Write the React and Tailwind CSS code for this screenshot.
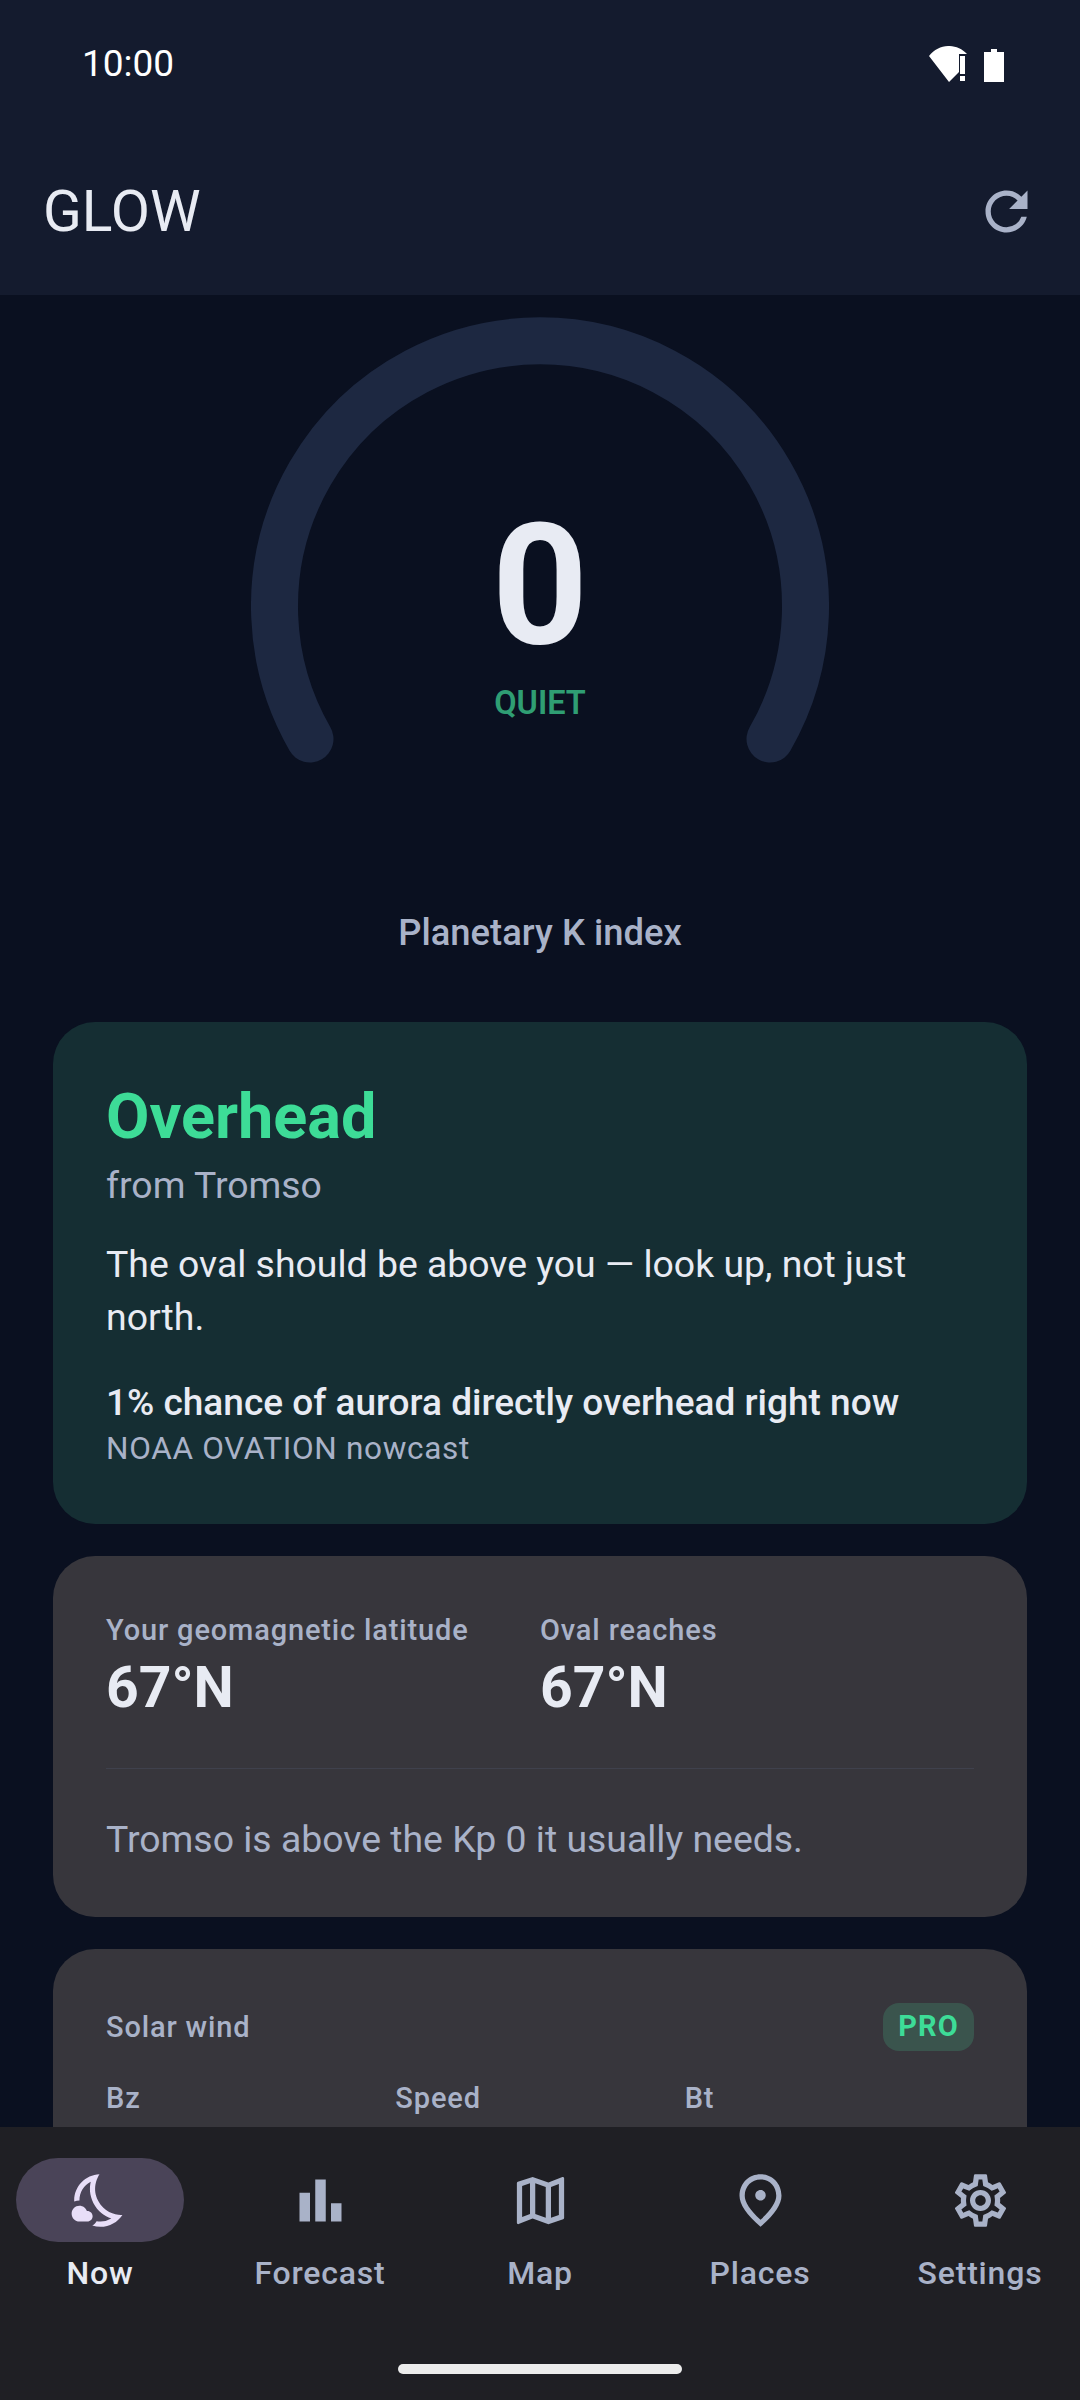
import { MdRefresh, MdBarChart, MdOutlineMap, MdOutlinePlace, MdOutlineSettings, MdOutlineNightsStay } from "react-icons/md";

const Gauge = () => {
  return (
    <div className="relative w-[578px] h-[470px]">
      <svg width="578" height="470" viewBox="0 0 578 470" className="block">
        <path d="M59 423 A265.5 265.5 0 1 1 519 423" fill="none" stroke="#1d2841" strokeWidth="47" strokeLinecap="round" />
      </svg>
      <div className="absolute left-0 right-0 top-[171px] text-center text-[168px] leading-[197px] font-bold text-[#e8ebf3]">0</div>
      <div className="absolute left-0 right-0 top-[366px] text-center text-[32.5px] leading-[42px] font-semibold text-[#2f9e73]">QUIET</div>
    </div>
  );
};

const StatusIcons = () => {
  return (
    <svg width="80" height="36" viewBox="0 0 80 36" className="block">
      <path d="M0 10 C10 -3 28 -3 38 8 L30 8 L30 26 L20 36 Z" fill="#fff" />
      <path d="M31 10h5v18h-5zM31 30h5v5h-5z" fill="#fff" />
      <path d="M55 6 h7 v-3 h6 v3 h7 v30 h-20 z" fill="#fff" />
    </svg>
  );
};

const Stat = ({ label, value, className }) => {
  return (
    <div className={className}>
      <div className="text-[29px] leading-[43px] font-medium tracking-[0.85px] text-[#a9b2c8]">{label}</div>
      <div className="mt-[2px] text-[57px] leading-[68px] font-bold text-[#e8ebf3]">{value}</div>
    </div>
  );
};

const NavItem = ({ icon: Icon, label, active }) => {
  return (
    <div className="w-[220px] shrink-0 flex flex-col items-center">
      <div className={`w-[168px] h-[84px] rounded-full flex items-center justify-center ${active ? "bg-[#4a4458] text-[#e8def8]" : "text-[#a9b2c8]"}`}>
        <Icon size={63} />
      </div>
      <div className={`mt-[10px] text-[32px] leading-[42px] font-medium tracking-[0.8px] ${active ? "text-[#e8ebf3]" : "text-[#a9b2c8]"}`}>{label}</div>
    </div>
  );
};

export default function App() {
  return (
    <div className="w-[1080px] h-[2400px] flex flex-col overflow-hidden bg-[#0a1020] font-['Roboto',sans-serif]">
      <header className="h-[295px] shrink-0 bg-[#141b2e] flex flex-col">
        <div className="h-[128px] pl-[82px] pr-[71px] flex items-center justify-between">
          <span className="text-[37px] leading-[44px] text-white">10:00</span>
          <StatusIcons />
        </div>
        <div className="flex-1 pl-[43px] pr-[42px] flex items-center justify-between">
          <span className="text-[57px] leading-[68px] text-[#e8ebf3]">GLOW</span>
          <MdRefresh size={63} className="text-[#a9b2c8]" />
        </div>
      </header>

      <main className="flex-1 min-h-0 overflow-hidden flex flex-col items-center">
        <div className="mt-[21px]">
          <Gauge />
        </div>
        <div className="mt-[125px] text-[36.4px] leading-[44px] font-medium text-[#a9b2c8]">Planetary K index</div>

        <section className="mt-[67px] w-[974px] h-[502px] shrink-0 rounded-[42px] bg-[#152e33] px-[53px] pt-[61px]">
          <div className="text-[63px] leading-[68px] font-bold text-[#3ddc97]">Overhead</div>
          <div className="mt-[10px] text-[37.4px] leading-[48px] text-[#a9b2c8]">from Tromso</div>
          <p className="mt-[29px] text-[37.4px] leading-[53px] text-[#e8ebf3]">The oval should be above you — look up, not just north.</p>
          <div className="mt-[35px] text-[37px] leading-[48px] font-medium text-[#e8ebf3]">1% chance of aurora directly overhead right now</div>
          <div className="mt-[2px] text-[31.5px] leading-[40px] tracking-[0.7px] text-[#a9b2c8]">NOAA OVATION nowcast</div>
        </section>

        <section className="mt-[32px] w-[974px] h-[361px] shrink-0 rounded-[42px] bg-[#37363c] px-[53px] pt-[53px]">
          <div className="flex">
            <Stat label="Your geomagnetic latitude" value="67°N" className="w-[434px]" />
            <Stat label="Oval reaches" value="67°N" />
          </div>
          <div className="mt-[46px] h-px bg-[#3f414d]" />
          <p className="mt-[46px] text-[37.4px] leading-[48px] text-[#a9b2c8]">Tromso is above the Kp 0 it usually needs.</p>
        </section>

        <section className="mt-[32px] w-[974px] shrink-0 grow rounded-t-[42px] bg-[#37363c] px-[53px] pt-[54px]">
          <div className="flex items-center justify-between">
            <span className="text-[29px] leading-[42px] font-medium tracking-[0.85px] text-[#a9b2c8]">Solar wind</span>
            <span className="w-[91px] h-[48px] rounded-[16px] bg-[#3a544d] flex items-center justify-center text-[29px] font-bold tracking-[1px] text-[#3ddc97]">PRO</span>
          </div>
          <div className="mt-[26px] grid grid-cols-3 text-[29px] leading-[42px] font-medium tracking-[0.85px] text-[#a9b2c8]">
            <span>Bz</span>
            <span>Speed</span>
            <span>Bt</span>
          </div>
        </section>
      </main>

      <nav className="h-[273px] shrink-0 bg-[#1f1f24] relative overflow-hidden">
        <div className="flex justify-center pt-[31px]">
          <NavItem icon={MdOutlineNightsStay} label="Now" active />
          <NavItem icon={MdBarChart} label="Forecast" />
          <NavItem icon={MdOutlineMap} label="Map" />
          <NavItem icon={MdOutlinePlace} label="Places" />
          <NavItem icon={MdOutlineSettings} label="Settings" />
        </div>
        <div className="absolute left-[398px] bottom-[26px] w-[284px] h-[10px] rounded-full bg-[#ececec]" />
      </nav>
    </div>
  );
}
